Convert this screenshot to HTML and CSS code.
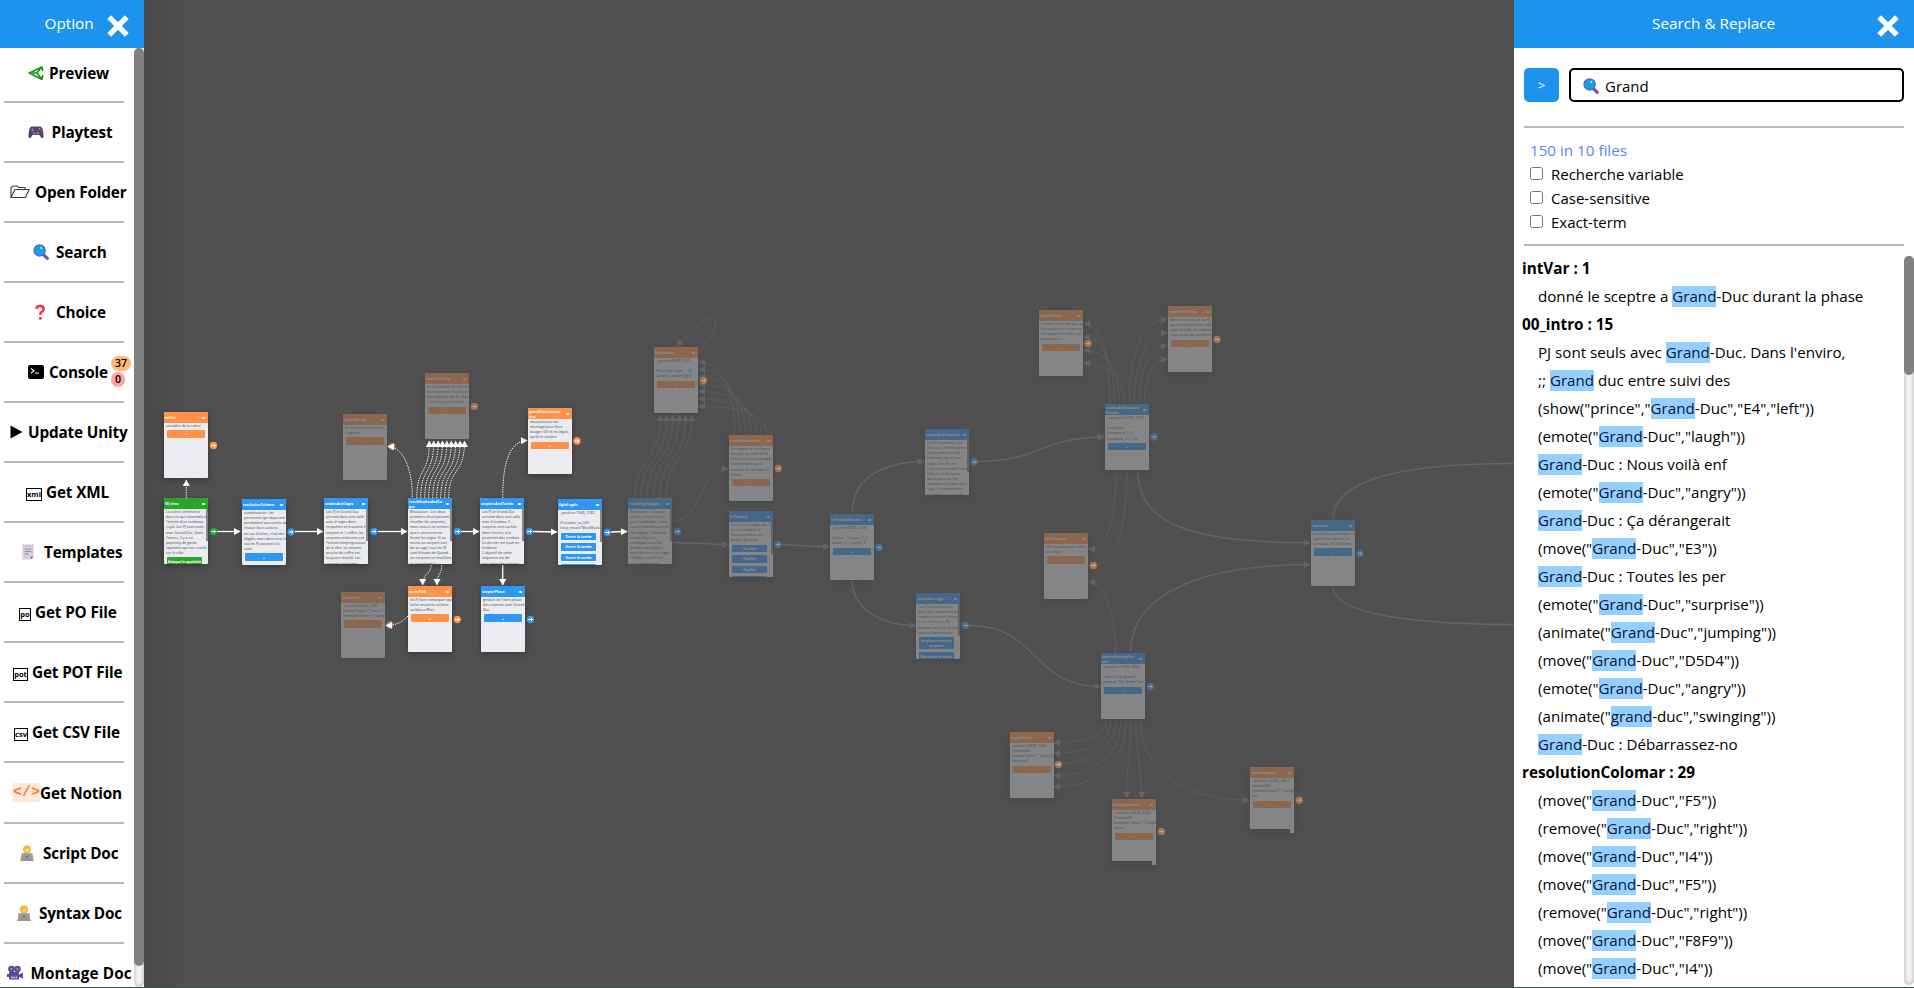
FILE: index.html
```html
<!DOCTYPE html>
<html lang="fr">
<head>
<meta charset="utf-8">
<title>Scenario editor</title>
<link rel="stylesheet" href="styles.css">
</head>
<body>
<svg class="symbols" width="0" height="0">
  <defs>
    <marker id="tip" markerUnits="userSpaceOnUse" markerWidth="8" markerHeight="8" refX="6" refY="3.5" orient="auto"><path d="M0 0L6.6 3.5L0 7z" fill="#fff"/></marker>
    <symbol id="close" viewBox="0 0 22 22"><path d="M2.2 2.2L19.8 19.8M19.8 2.2L2.2 19.8" stroke="#fff" stroke-width="5.4"/></symbol>
    <symbol id="lens" viewBox="0 0 16 16"><path d="M9.8 10L14.3 14.3" stroke="#6b5b9a" stroke-width="3.2" stroke-linecap="round"/><circle cx="6.6" cy="6.4" r="5.6" fill="#0fa4ea" stroke="#6262ae" stroke-width="1.3"/><circle cx="8.2" cy="3.9" r="1" fill="#bfeaff"/></symbol>
    <symbol id="coder" viewBox="0 0 16 17"><circle cx="8" cy="4.6" r="4.2" fill="#f8b32c"/><path d="M5.8 4.2q2 .2 4.200-1.600q1.400 4.800-2.100 5q-2.300 0-2.100-3.400z" fill="#ffd36b"/><path d="M1 16q0-6.500 4-7h6q4 .5 4 7z" fill="#f6ad2e"/><rect x="2" y="8.700" width="12" height="7.600" rx=".8" fill="#9a9a9a"/><circle cx="8" cy="12.300" r="1" fill="#5c5c5c"/><path d="M1 16.400h14" stroke="#888"/></symbol>
    <symbol id="eye" viewBox="0 0 6 4"><path d="M.5 2Q3-.6 5.500 2Q3 4.600.5 2z" fill="#fff"/></symbol>
    <symbol id="go" viewBox="0 0 8 8"><circle cx="4" cy="4" r="3.700" fill="currentColor"/><path d="M1.800 4H6M4.400 2.500L6 4L4.400 5.500" fill="none" stroke="#fff" stroke-width="1"/></symbol>
  </defs>
</svg>

<div class="app">
<aside class="side">
  <header class="bar side-bar"><span>Option</span><svg class="close"><use href="#close"/></svg></header>
  <div class="side-body">
    <nav class="menu">
      <a class="item" style="padding-left:24px"><svg class="ico" viewBox="0 0 16 16"><path d="M14 2L1.500 8L14 14.500M13.800 1.500L14.800 6M14.800 10L13.800 14.800M4.500 8H9L13.600 2M9 8L13.600 14" fill="none" stroke="#159a15" stroke-width="1.700"/></svg><b style="margin-left:5px">Preview</b></a>
      <a class="item" style="padding-left:24px"><svg class="ico" viewBox="0 0 16 16"><path d="M4 2.500h8q2.500 0 3.200 5.500t-.2 6q-2 .8-3.500-3h-7q-1.500 3.800-3.500 3q-.9-.5-.2-6t3.200-5.500z" fill="#55406f"/><path d="M3 6h3M4.500 4.500v3" stroke="#8d80a8"/><circle cx="11.500" cy="4.500" r=".8" fill="#e0a23a"/><circle cx="13" cy="6.300" r=".8" fill="#5590d8"/><circle cx="10" cy="6.300" r=".8" fill="#c84b68"/><circle cx="6.300" cy="9.200" r="1.200" fill="#8d80a8"/><circle cx="9.800" cy="9.200" r="1.200" fill="#8d80a8"/></svg><b style="margin-left:7.500px">Playtest</b></a>
      <a class="item" style="padding-left:6px"><svg class="ico folder" viewBox="0 0 20 14"><path d="M1 12.500V2.500L3 1H7L8.500 2.500H15V4.500M1 12.500L5 4.500H19.200L15.500 12.500z" fill="#fff" stroke="#3b3b3b" stroke-width="1.100"/></svg><b style="margin-left:5px">Open Folder</b></a>
      <a class="item" style="padding-left:29px"><svg class="ico"><use href="#lens"/></svg><b style="margin-left:7px">Search</b></a>
      <a class="item" style="padding-left:28px"><svg class="ico" viewBox="0 0 16 16"><path d="M4.500 5Q4.600 2 8 2Q11.700 2 11.700 5Q11.700 7 9.500 8Q8.300 8.800 8.300 11" fill="none" stroke="#f7343c" stroke-width="2.500"/><circle cx="8.300" cy="14.200" r="1.500" fill="#f7343c"/></svg><b style="margin-left:8px">Choice</b></a>
      <a class="item" style="padding-left:24px"><svg class="ico" viewBox="0 0 16 16"><rect y="1" width="16" height="14" rx="2" fill="#000"/><path d="M3 4.500L6 6.700L3 9M7 9h4" fill="none" stroke="#fff" stroke-width="1.100"/></svg><b style="margin-left:5px">Console</b><span class="badges"><i class="warn">37</i><i class="err">0</i></span></a>
      <a class="item" style="padding-left:6px"><svg class="ico play" viewBox="0 0 13 14"><path d="M.5.5L12.500 7L.5 13.500z"/></svg><b style="margin-left:5px">Update Unity</b></a>
      <a class="item" style="padding-left:22px"><span class="ext" style="width:16px">xml</span><b style="margin-left:4px">Get XML</b></a>
      <a class="item" style="padding-left:16px"><svg class="ico" viewBox="0 0 16 17"><path d="M2 1.500h12v12l-3 3H2z" fill="#d6cfdf"/><path d="M14 13.500h-3v3z" fill="#756586"/><path d="M2.500 1.500h11" stroke="#a99cb8" stroke-width="1.800" stroke-dasharray="1 1"/><path d="M4.500 5.500h7M4.500 8h7M4.500 10.500h4" stroke="#8f829f"/></svg><b style="margin-left:8px">Templates</b></a>
      <a class="item" style="padding-left:15px"><span class="ext" style="width:12px">po</span><b style="margin-left:4px">Get PO File</b></a>
      <a class="item" style="padding-left:9px"><span class="ext" style="width:15px">pot</span><b style="margin-left:4px">Get POT File</b></a>
      <a class="item" style="padding-left:10px"><span class="ext" style="width:14px">csv</span><b style="margin-left:4px">Get CSV File</b></a>
      <a class="item tall" style="padding-left:9px"><span class="code">&lt;/&gt;</span><b>Get Notion</b></a>
      <a class="item" style="padding-left:15px"><svg class="ico"><use href="#coder"/></svg><b style="margin-left:8px">Script Doc</b></a>
      <a class="item" style="padding-left:12px"><svg class="ico"><use href="#coder"/></svg><b style="margin-left:7px">Syntax Doc</b></a>
      <a class="item wide" style="padding-left:3px"><svg class="ico" viewBox="0 0 16 16"><circle cx="4.500" cy="4" r="3.300" fill="#5b4a92"/><circle cx="10.500" cy="4" r="3.300" fill="#5b4a92"/><circle cx="4.500" cy="4" r="1" fill="#a99fd0"/><circle cx="10.500" cy="4" r="1" fill="#a99fd0"/><path d="M2 7h10v2.500l4-2v6l-4-1.500v2.500H2zM0 9h2v3H0z" fill="#5b4a92"/><path d="M4 12.500h6" stroke="#e8e4f4" stroke-width="1.500" stroke-dasharray="1.500 .8"/></svg><b style="margin-left:7.500px">Montage Doc</b></a>
    </nav>
    <div class="track"><div class="thumb side-thumb"></div></div>
  </div>
</aside>

<main class="canvas">
  <svg class="edges" viewBox="144 0 1370 988" fill="none" stroke="#fff">
    <g marker-end="url(#tip)" stroke-width="1.300">
      <path d="M295 531.500H323"/><path d="M217 531.500H240"/><path d="M378 531.500H407"/><path d="M461 531.500H479"/><path d="M533 531.500L557 532"/><path d="M611 532L627 531.500"/><path d="M502.700 565V585"/>
    </g>
    <g class="dots" marker-end="url(#tip)">
      <path d="M186.300 498V480"/>
      <path d="M416.700 498C417 466 429.300 476 429.300 441"/><path d="M420.700 498C421 466 433.700 476 433.700 441"/><path d="M424.700 498C425 466 438.100 476 438.100 441"/><path d="M428.700 498C429 466 442.500 476 442.500 441"/><path d="M432.700 498C433 466 446.900 476 446.900 441"/><path d="M436.700 498C437 466 451.300 476 451.300 441"/><path d="M440.700 498C441 466 455.700 476 455.700 441"/><path d="M444.700 498C445 466 460.100 476 460.100 441"/><path d="M448.700 498C449 466 464.500 476 464.500 441"/>
      <path d="M502.700 498C502.700 455 513 441 527 440.500"/>
      <path d="M431 565C431 575 422.700 573 422.700 585"/><path d="M441.700 565C441.700 575 437 573 437 585"/>
    </g>
    <g class="faint" marker-end="url(#tip)" stroke-width="1.300">
      <path d="M673 542.500L728 544.700"/><path d="M782 544.500L829 547"/>
      <path d="M852.300 513C852.300 480 880 462 924 461.500"/><path d="M852.300 581C852.300 608 880 625 915.500 625.500"/>
      <path d="M978 461.500C1040 461.500 1040 437 1104 437"/><path d="M969 625.500C1040 625.500 1030 686.500 1100.500 686.500"/>
      <path d="M1138 471C1138 530 1205 542.700 1310 542.700"/><path d="M1130.700 652C1130.700 590 1210 564.700 1310 564.700"/>
    </g>
    <g class="faint" stroke-width="1.300"><path d="M1333 519C1333 475 1420 463.500 1514 463.500M1333 587C1333 615 1420 624.500 1514 624.500"/></g>
    <g class="faint dots" marker-end="url(#tip)">
      <path d="M634.700 498C634.700 455 660.300 465 660.300 415"/><path d="M641 498C641 455 666.600 465 666.600 415"/><path d="M647.200 498C647.200 455 672.900 465 672.900 415"/><path d="M653.500 498C653.500 455 679.200 465 679.200 415"/><path d="M659.700 498C659.700 455 685.500 465 685.500 415"/><path d="M666 498C666 455 691.800 465 691.800 415"/>
      <path d="M698 355C718 330 720 315 709 317.500C700 320 688 335 677 346"/>
      <path d="M734.700 435C734.700 395 724 362.300 699 362.300"/><path d="M740.100 435C740.100 400 728 369.700 699 369.700"/><path d="M745.500 435C745.500 408 732 377 699 377"/><path d="M750.900 435C750.900 412 738 384 699 384"/><path d="M756.300 435C756.300 416 742 391.300 699 391.300"/><path d="M761.700 435C761.700 420 745 399 699 399"/><path d="M767.100 435C767.100 420 750 406.300 699 406.300"/>
      <path d="M673 520.700C702 520.700 700 468.700 728 468.700"/>
      <path d="M1109.700 403C1109.700 366 1104 323.700 1084 323.700"/><path d="M1114.700 403C1114.700 370 1106 337 1084 337"/><path d="M1119.700 403C1119.700 374 1108 350.300 1084 350.300"/><path d="M1124.700 403C1124.700 378 1110 363.300 1084 363.300"/>
      <path d="M1129.300 403C1129.300 350 1145 319.700 1167 319.700"/><path d="M1134.300 403C1134.300 360 1147 333 1167 333"/><path d="M1139.300 403C1139.300 370 1150 346 1167 346"/><path d="M1144.300 403C1144.300 378 1153 359.300 1167 359.300"/>
      <path d="M1115.700 471C1115.700 515 1109 549.300 1089 549.300"/><path d="M1126.700 471C1126.700 520 1120 565.500 1090 565.500"/>
      <path d="M1115.300 652C1115.300 618 1107 582.300 1089 582.300"/>
      <path d="M1106 720C1106 735 1085 742.700 1054 742.700"/><path d="M1110.700 720C1110.700 740 1092 753.300 1054 753.300"/><path d="M1115.700 720C1115.700 744 1096 764.300 1054 764.300"/><path d="M1120.700 720C1120.700 750 1100 775.700 1054 775.700"/><path d="M1125.700 720C1125.700 760 1102 786.700 1054 786.700"/>
      <path d="M1130.700 720C1130.700 760 1126.700 760 1126.700 798"/><path d="M1135.700 720C1135.700 750 1141.700 770 1141.700 798"/><path d="M1140.300 720C1140.300 770 1185 800.300 1249 800.300"/>
    </g>
  </svg>

  <article class="node orange" style="left:20px;top:412px"><h4>intVar<svg><use href="#eye"/></svg></h4><p>variables de la scène</p><button>+</button></article>
  <article class="node green scroll" style="left:20px;top:498px"><h4>00_intro<svg><use href="#eye"/></svg></h4><p>La scène commence
dans ce qui ressemble à
l'entrée d'un tombeau
royal. Les PJ sont seuls
avec Grand-Duc. Dans
l'enviro, il y a un
papertoy de garde
squelette qui est couché
sur le côté</p><button>Attaque le squelette</button></article>
  <article class="node blue" style="left:98px;top:499px"><h4>resolutionColomar<svg><use href="#eye"/></svg></h4><p>combinatoire : les
personnes qui réqucient
permettent aux autres de
réussir leurs actions
en cas d'échec, c'est des
dégâts, mais dans tous les
cas les PJ passent à la
suite</p><button>+</button></article>
  <article class="node blue scroll" style="left:180px;top:498px"><h4>snakesAndCages<svg><use href="#eye"/></svg></h4><p>Les PJ et Grand-Duc
arrivent dans une salle
avec 4 cages dans
lesquelles se trouvent 4
serpent et 1 coffre. les
serpents endormis ont
l'emote sleeping autour
de la tête. Le serpent
proche du coffre est
toujours réveillé. Les
serpents endormis</p></article>
  <article class="node blue scroll" style="left:264px;top:498px"><h4>resultSnakesAndCa<br>ges<svg><use href="#eye"/></svg></h4><p>Résolution : Les deux
premiers choix peuvent
réveiller les serpents,
mais ceux-ci ne sortent
que si personne ne
ferme les cages. Si au
moins un serpent sort
de sa cage, tous les PJ
sont blessés de Quand
les serpents se réveillent,
ils se mettent à</p></article>
  <article class="node blue scroll" style="left:336px;top:498px"><h4>sceptersAndTombs<svg><use href="#eye"/></svg></h4><p>Les PJ et Grand-Duc
arrivent dans une salle
avec 4 tombes. 5
sceptres sont cachés
dans l'enviro, à la
proximité des tombes.
Le dernier est posé en
évidence.
L'objectif de cette
séquence est de
récupérer les sceptres</p></article>
  <article class="node blue scroll" style="left:414px;top:499px"><h4>fightLegals<svg><use href="#eye"/></svg></h4><p>; position 7643, 2182

(if scepter_to_GD)
(stop_music("MonMusic")</p><button>Ouvrir la tombe</button><button>Ouvrir la tombe</button><button>Ouvrir la tombe</button><button></button></article>
  <article class="node blue scroll dim" style="left:484px;top:498px"><h4>resultsFightLegals<svg><use href="#eye"/></svg></h4><p>Résolution : Il faut au
moins une personne
pour combatter, sinon
tout le monde se prend
des dégâts. ! Ouvrir la
tombe d'un roi
maléfique nous fait
prendre des dégâts
mais fait sortir les légals
! Chaque succès fait
sortir un légal. On</p></article>
  <article class="node orange dim" style="left:281px;top:373px"><h4>snakeWakeUp<svg><use href="#eye"/></svg></h4><p>ce call permet de réveiller
les serpents en fonction
des résultats des PJ. Viper
1 est toujours réveillé.</p><button>+</button></article>
  <article class="node orange" style="left:384px;top:408px"><h4>grandDukeCinema<br>tion<svg><use href="#eye"/></svg></h4><p>mutualisation du
montage pour faire
bouger GD et les légals
après le sceptre</p><button>+</button></article>
  <article class="node orange dim" style="left:199px;top:414px"><h4>snakeMoving<svg><use href="#eye"/></svg></h4><p>Ici les serpents réveillés
s'agitent</p><button>+</button></article>
  <article class="node orange dim" style="left:197px;top:592px"><h4>snakeSeen<svg><use href="#eye"/></svg></h4><p>; position 6626, 2787
(create("viper1","loue"))
(animate("viper1","swing"</p><button>+</button></article>
  <article class="node orange" style="left:264px;top:586px"><h4>snakeTalk<svg><use href="#eye"/></svg></h4><p>les PJ font remarquer que
le/les serpents cachent
un/des coffres</p><button>+</button></article>
  <article class="node blue" style="left:337px;top:586px"><h4>scepterPhase<svg><use href="#eye"/></svg></h4><p>gestion de l'item phase
des sceptres avec Grand-
Duc</p><button>+</button></article>
  <article class="node orange dim" style="left:510px;top:347px"><h4>legalLeaver<svg><use href="#eye"/></svg></h4><p>; position 8050, 1670

(if number_legal == 5)
(camera_shake("light"</p><button>+</button></article>
  <article class="node orange dim" style="left:585px;top:435px"><h4>themeResolution<svg><use href="#eye"/></svg></h4><p>On sépare la résolution
du jeter du reste de la
résolution pour soulager
le batchisme sur le
nombre de call dans le
fichier.</p><button>+</button></article>
  <article class="node blue scroll dim" style="left:585px;top:511px"><h4>inTheDark<svg><use href="#eye"/></svg></h4><p>Les PJ sont piégés dans
le noir complet et
doivent trouver un
moyen de sortir.</p><button>Fouiller</button><button>Fouiller</button><button>Fouiller</button><button></button></article>
  <article class="node blue dim" style="left:686px;top:514px"><h4>inTheDarkResults<svg><use href="#eye"/></svg></h4><p>; position 8892, 2430

(action = "(action_1 ||
action_2 || action_3</p><button>+</button></article>
  <article class="node blue scroll dim" style="left:781px;top:429px"><h4>snakesAndTreasure<svg><use href="#eye"/></svg></h4><p>Les PJ reviennent sur
leurs pas. Heureusement
les serpents ont été
enfermés dans leurs
cages ! Les PJ ont
l'occasion de vider leurs
trésors ou de partir.
Autre branche, les
serpents sont dans leur
cage. Ils peuvent être
seulement un réveillé</p></article>
  <article class="node blue scroll dim" style="left:772px;top:593px"><h4>snakesRevenge<svg><use href="#eye"/></svg></h4><p>Les PJ reviennent sur
leurs pas. Seulement les
serpents sont en liberté
et en colère. Les PJ
doivent traverser la salle
sans se faire mordre...</p><button class="double">Se glisser entre les<br>serpents</button><button>Récupérer le trésor</button></article>
  <article class="node blue dim" style="left:961px;top:404px"><h4>snakesAndTreasure<br>Results<svg><use href="#eye"/></svg></h4><p>; position 10103, 1909

(recuperer = "
(recuperer_1 ||
recuperer_2 || rec</p><button>+</button></article>
  <article class="node orange dim" style="left:895px;top:310px"><h4>snakeKilling<svg><use href="#eye"/></svg></h4><p>Comme on ne sait pas qui
fait un succès critique en
récupérant le trésor, on
mutualise ici.</p><button>+</button></article>
  <article class="node orange dim" style="left:1024px;top:306px"><h4>snakeSafeKilling<svg><use href="#eye"/></svg></h4><p>Même chose pour les PJ
qui ont récupéré un coffre
sans réveiller de serpent
c'est un cas de succès crit</p><button>+</button></article>
  <article class="node orange dim" style="left:900px;top:533px"><h4>lostTreasure<svg><use href="#eye"/></svg></h4><p>On mutualise les coffres
au trésor</p><button>+</button></article>
  <article class="node blue dim" style="left:957px;top:653px"><h4>snakesRevengeRes<br>ults<svg><use href="#eye"/></svg></h4><p>; position 10082, 3086

; (choice "se_glisser"
position "F4" shape "line</p><button>+</button></article>
  <article class="node orange dim" style="left:866px;top:732px"><h4>angrySnakes<svg><use href="#eye"/></svg></h4><p>; position 9682, 3420
(instant(0))
(emote("viper1","angry"))
(animate("</p><button>+</button></article>
  <article class="node orange dim hscroll" style="left:968px;top:799px"><h4>jumpingSnakes<svg><use href="#eye"/></svg></h4><p>; position 10134, 3725
(instant(0))
(animate("viper1","jumping
(anim</p><button>+</button></article>
  <article class="node orange dim hscroll" style="left:1106px;top:767px"><h4>snakeSwinging<svg><use href="#eye"/></svg></h4><p>; position 10703, 3562
(instant(0))
(animate("viper1","swinging
(ani</p><button>+</button></article>
  <article class="node blue dim" style="left:1167px;top:520px"><h4>explosion<svg><use href="#eye"/></svg></h4><p>Les PJ découvrent que les
légals font exploser le
tombeau. Ils s'enfuient.</p><button>+</button></article>

  <svg class="edges" viewBox="144 0 1370 988">
    <g color="#ff9249"><use href="#go" x="209.500" y="441.500" width="8" height="8"/><use href="#go" x="573" y="437" width="8" height="8"/><use href="#go" x="453.300" y="615.500" width="8" height="8"/></g>
    <use href="#go" x="209.500" y="527.500" width="8" height="8" color="#2aa52a"/>
    <g color="#3096f3"><use href="#go" x="287" y="528" width="8" height="8"/><use href="#go" x="370" y="527.500" width="8" height="8"/><use href="#go" x="453.500" y="527.500" width="8" height="8"/><use href="#go" x="525.500" y="527.500" width="8" height="8"/><use href="#go" x="603.300" y="528.500" width="8" height="8"/><use href="#go" x="526.500" y="615.500" width="8" height="8"/></g>
    <g color="#ff9249" opacity=".5"><use href="#go" x="470.300" y="402.500" width="8" height="8"/><use href="#go" x="388" y="442.500" width="8" height="8"/><use href="#go" x="386" y="621" width="8" height="8"/><use href="#go" x="699.500" y="376.500" width="8" height="8"/><use href="#go" x="774.300" y="464.500" width="8" height="8"/><use href="#go" x="1084" y="339.500" width="8" height="8"/><use href="#go" x="1213" y="335.500" width="8" height="8"/><use href="#go" x="1089.300" y="561.500" width="8" height="8"/><use href="#go" x="1054.500" y="760.500" width="8" height="8"/><use href="#go" x="1157.300" y="827.500" width="8" height="8"/><use href="#go" x="1295.300" y="796.300" width="8" height="8"/></g>
    <g color="#3096f3" opacity=".45"><use href="#go" x="673.500" y="527.500" width="8" height="8"/><use href="#go" x="774" y="540.500" width="8" height="8"/><use href="#go" x="875" y="543.500" width="8" height="8"/><use href="#go" x="970.300" y="458" width="8" height="8"/><use href="#go" x="961.500" y="621.500" width="8" height="8"/><use href="#go" x="1150" y="433" width="8" height="8"/><use href="#go" x="1146.300" y="682.500" width="8" height="8"/><use href="#go" x="1356" y="549.500" width="8" height="8"/></g>
    <g class="dots" fill="none" stroke="#fff" marker-end="url(#tip)"><path d="M412.300 497C412.300 470 404 447 388 446.500"/><path d="M408 616C402 622 398 625 386 625.500"/></g>
  </svg>
</main>

<aside class="search">
  <header class="bar search-bar"><span>Search &amp; Replace</span><svg class="close"><use href="#close"/></svg></header>
  <div class="query">
    <button class="toggle">&gt;</button>
    <div class="field"><svg><use href="#lens"/></svg><span>Grand</span></div>
  </div>
  <div class="filters">
    <div class="count">150 in 10 files</div>
    <label><input type="checkbox">Recherche variable</label>
    <label><input type="checkbox">Case-sensitive</label>
    <label><input type="checkbox">Exact-term</label>
  </div>
  <div class="results">
    <div class="list">
      <h3>intVar : 1</h3>
      <p>donné le sceptre a <mark>Grand</mark>-Duc durant la phase</p>
      <h3>00_intro : 15</h3>
      <p>PJ sont seuls avec <mark>Grand</mark>-Duc. Dans l'enviro,</p>
      <p>;; <mark>Grand</mark> duc entre suivi des</p>
      <p>(show("prince","<mark>Grand</mark>-Duc","E4","left"))</p>
      <p>(emote("<mark>Grand</mark>-Duc","laugh"))</p>
      <p><mark>Grand</mark>-Duc : Nous voilà enf</p>
      <p>(emote("<mark>Grand</mark>-Duc","angry"))</p>
      <p><mark>Grand</mark>-Duc : Ça dérangerait</p>
      <p>(move("<mark>Grand</mark>-Duc","E3"))</p>
      <p><mark>Grand</mark>-Duc : Toutes les per</p>
      <p>(emote("<mark>Grand</mark>-Duc","surprise"))</p>
      <p>(animate("<mark>Grand</mark>-Duc","jumping"))</p>
      <p>(move("<mark>Grand</mark>-Duc","D5D4"))</p>
      <p>(emote("<mark>Grand</mark>-Duc","angry"))</p>
      <p>(animate("<mark>grand</mark>-duc","swinging"))</p>
      <p><mark>Grand</mark>-Duc : Débarrassez-no</p>
      <h3>resolutionColomar : 29</h3>
      <p>(move("<mark>Grand</mark>-Duc","F5"))</p>
      <p>(remove("<mark>Grand</mark>-Duc","right"))</p>
      <p>(move("<mark>Grand</mark>-Duc","I4"))</p>
      <p>(move("<mark>Grand</mark>-Duc","F5"))</p>
      <p>(remove("<mark>Grand</mark>-Duc","right"))</p>
      <p>(move("<mark>Grand</mark>-Duc","F8F9"))</p>
      <p>(move("<mark>Grand</mark>-Duc","I4"))</p>
    </div>
    <div class="track result-track"><div class="thumb result-thumb"></div></div>
  </div>
</aside>
</div>
<div class="base"></div>
</body>
</html>
```
FILE: styles.css
```css
* { box-sizing: border-box; }
body { margin: 0; width: 1914px; height: 988px; overflow: hidden; display: flex; flex-direction: column; background: #505050; font: 16px/20px "Open Sans", "Noto Sans", sans-serif; color: #000; }
h3, h4, p { margin: 0; }
.symbols { position: absolute; }
.app { display: flex; height: 987px; }
.base { height: 1px; background: #37504b; }

.bar { height: 48px; display: flex; align-items: center; background: #1c94ee; color: #fff; font-size: 15.300px; flex: none; }
.bar span { margin-bottom: 2px; }
.close { width: 22px; height: 22px; display: block; margin-top: 4px; }
.side { width: 144px; background: #fff; display: flex; flex-direction: column; flex: none; }
.side-bar { padding-left: 44.500px; }
.side-bar .close { margin-left: auto; margin-right: 15px; }
.side-body { flex: 1; display: flex; overflow: hidden; }
.menu { width: 134px; overflow: hidden; padding: 0 0 0 4px; }
.item { display: flex; align-items: center; height: 60px; width: 130px; white-space: nowrap; font-size: 15.300px; letter-spacing: -.15px; border-bottom: 2px solid transparent; background: linear-gradient(#b8b8b8, #b8b8b8) 0 100% / 120px 2px no-repeat border-box; }
.item:first-child { height: 55px; padding-bottom: 4px; }
.item.tall { height: 61px; }
.item.wide { letter-spacing: .1px; }
.item b { font-weight: 700; }
.ico { width: 16px; height: 16px; flex: none; }
.folder { width: 20px; height: 14px; }
.play { width: 13px; height: 14px; }
.ext { border: 1px solid #000; height: 13px; font: 700 7.500px/11px "Open Sans", sans-serif; text-align: center; letter-spacing: 0; margin-top: 4px; flex: none; }
.code { width: 27px; height: 19px; background: #ffead8; color: #ff7632; font: 700 15px/19px "Liberation Mono", monospace; letter-spacing: 0; }
.badges { display: flex; flex-direction: column; align-items: flex-start; gap: 1px; margin-left: 3px; margin-top: -2px; }
.badges i { font: 600 10.500px/15px "Open Sans", sans-serif; height: 15px; padding: 0 4px; border-radius: 8px; letter-spacing: 0; }
.warn { background: #fdb975; }
.err { background: #fda4a4; }
.track { width: 10px; background: #f2f2f2; border-radius: 5px; box-shadow: inset 0 0 4px #aaa; }
.thumb { background: #808080; border-radius: 5px; width: 10px; }
.side-thumb { height: 918px; }

.canvas { width: 1370px; position: relative; overflow: hidden; background: linear-gradient(90deg, #484848, #505050 40px); flex: none; }
.edges { position: absolute; inset: 0; width: 1370px; height: 988px; }
.dots { stroke-dasharray: 1.300 1.100; stroke-width: 1; }
.faint { opacity: .12; }
.node { position: absolute; width: 44px; height: 66px; border-radius: 1px; overflow: hidden; background: #eaecf0; box-shadow: 0 2px 6px rgba(0, 0, 0, .3); color: #444; font: 3.600px/5.150px "Open Sans", sans-serif; }
.node h4 { height: 11px; background: var(--tone); color: #fff; display: flex; align-items: center; justify-content: space-between; padding: 0 2px 0 1px; font: 700 3.400px/5px "Open Sans", sans-serif; }
.node h4 { position: relative; display: block; line-height: 5px; padding-top: 1px; }
.node h4:not(:has(br)) { line-height: 10px; }
.node h4 svg { position: absolute; right: 2px; top: 4px; width: 5px; height: 4px; }
.node p { white-space: pre; padding-left: 2px; }
.node button { display: block; margin: 2px 3px 3px; width: 38px; height: 7.500px; border: 0; padding: 0; border-radius: 1px; background: var(--tone); color: #fff; font: 700 3.300px/5px "Open Sans", sans-serif; white-space: nowrap; }
.node button.double { height: 12.500px; }
.orange { --tone: #ff9249; }
.blue { --tone: #3096f3; }
.green { --tone: #2aa52a; }
.dim { opacity: .34; }
.scroll::after { content: ""; position: absolute; right: 0; top: 11px; width: 2px; height: 32px; background: #888; }
.node.scroll button { width: 35px; }
.hscroll::after { content: ""; position: absolute; left: 0; bottom: 0; width: 40px; height: 4px; background: #444; }

.search { width: 400px; background: #fff; display: flex; flex-direction: column; }
.search-bar { padding-left: 138px; }
.search-bar span { width: 220px; }
.search-bar .close { margin-left: auto; margin-right: 15px; }
.query { display: flex; gap: 10px; margin: 20px 10px 0; height: 60px; align-items: flex-start; border-bottom: 2px solid #b8b8b8; }
.toggle { width: 35px; height: 34px; border: 0; border-radius: 5px; background: #1c94ee; color: #fff; font: 13.300px "Open Sans", sans-serif; }
.field { flex: 1; height: 34px; border: 2px solid #000; border-radius: 5px; display: flex; align-items: center; padding: 2px 0 0 12px; gap: 6px; font-size: 15px; }
.field svg { width: 16px; height: 16px; }
.filters { margin: 0 10px; height: 118px; padding: 10px 0 0 6px; border-bottom: 2px solid #b8b8b8; font-size: 15px; line-height: 24px; }
.count { color: #5a86f5; font-size: 15.200px; }
.filters label { display: flex; align-items: center; height: 24px; }
.filters input { width: 13px; height: 13px; margin: -2px 8px 0 0; }
.results { flex: 1; display: flex; padding-top: 8px; overflow: hidden; }
.list { width: 390px; padding-left: 8px; font-size: 15.150px; line-height: 28px; }
.list h3 { font-size: 15.300px; line-height: 28px; height: 28px; }
.list p { padding-left: 16px; height: 28px; white-space: nowrap; }
.list mark { background: #94cfff; color: #06183a; padding: 0; display: inline-block; height: 21px; line-height: 21px; }
.result-track { margin: 2px 0 2px; }
.result-thumb { height: 119px; }
```
